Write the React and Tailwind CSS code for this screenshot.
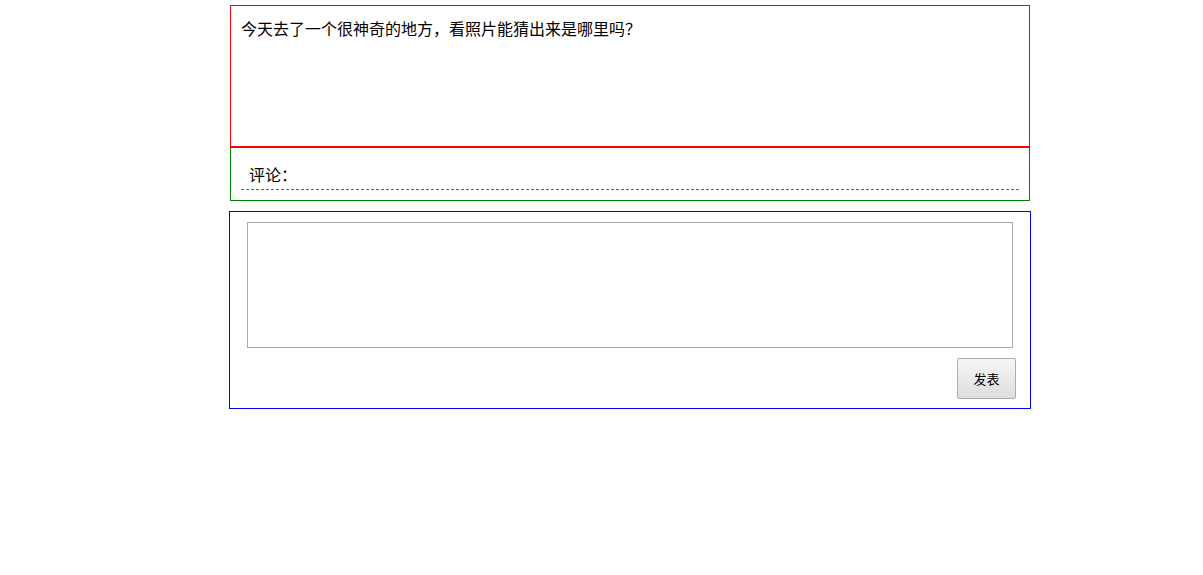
export default function App() {
  return (
    <div
      className="w-[802px] ml-[229px] pt-[5px] text-black"
      style={{ fontFamily: '"Microsoft YaHei", "Noto Sans CJK SC", sans-serif' }}
    >
      {/* 帖子 */}
      <div className="ml-[1px] w-[800px]">
        <div className="h-[142px] border border-[#ff0000] px-[10px] pt-[10px] text-[16px] leading-6">
          今天去了一个很神奇的地方，看照片能猜出来是哪里吗？
        </div>
        <div className="h-[54px] border border-[#008000] px-[10px] pt-[10px]">
          <div className="h-[32px] border-b border-dashed border-[#666666] pl-[8px] pt-[4px] text-[16px] leading-6">
            评论：
          </div>
        </div>
      </div>

      {/* 发表评论 */}
      <div className="mt-[10px] border border-[#0000ff] pl-[17px] pr-[14px] pt-[10px] pb-[9px]">
        <textarea className="block w-[766px] h-[126px] border border-[#a9a9a9] resize-none outline-none" />
        <div className="mt-[10px] flex justify-end">
          <button className="w-[59px] h-[41px] rounded-[2px] border border-[#adadad] bg-gradient-to-b from-[#f6f6f6] to-[#dedede] text-[13px] text-black">
            发表
          </button>
        </div>
      </div>
    </div>
  );
}
